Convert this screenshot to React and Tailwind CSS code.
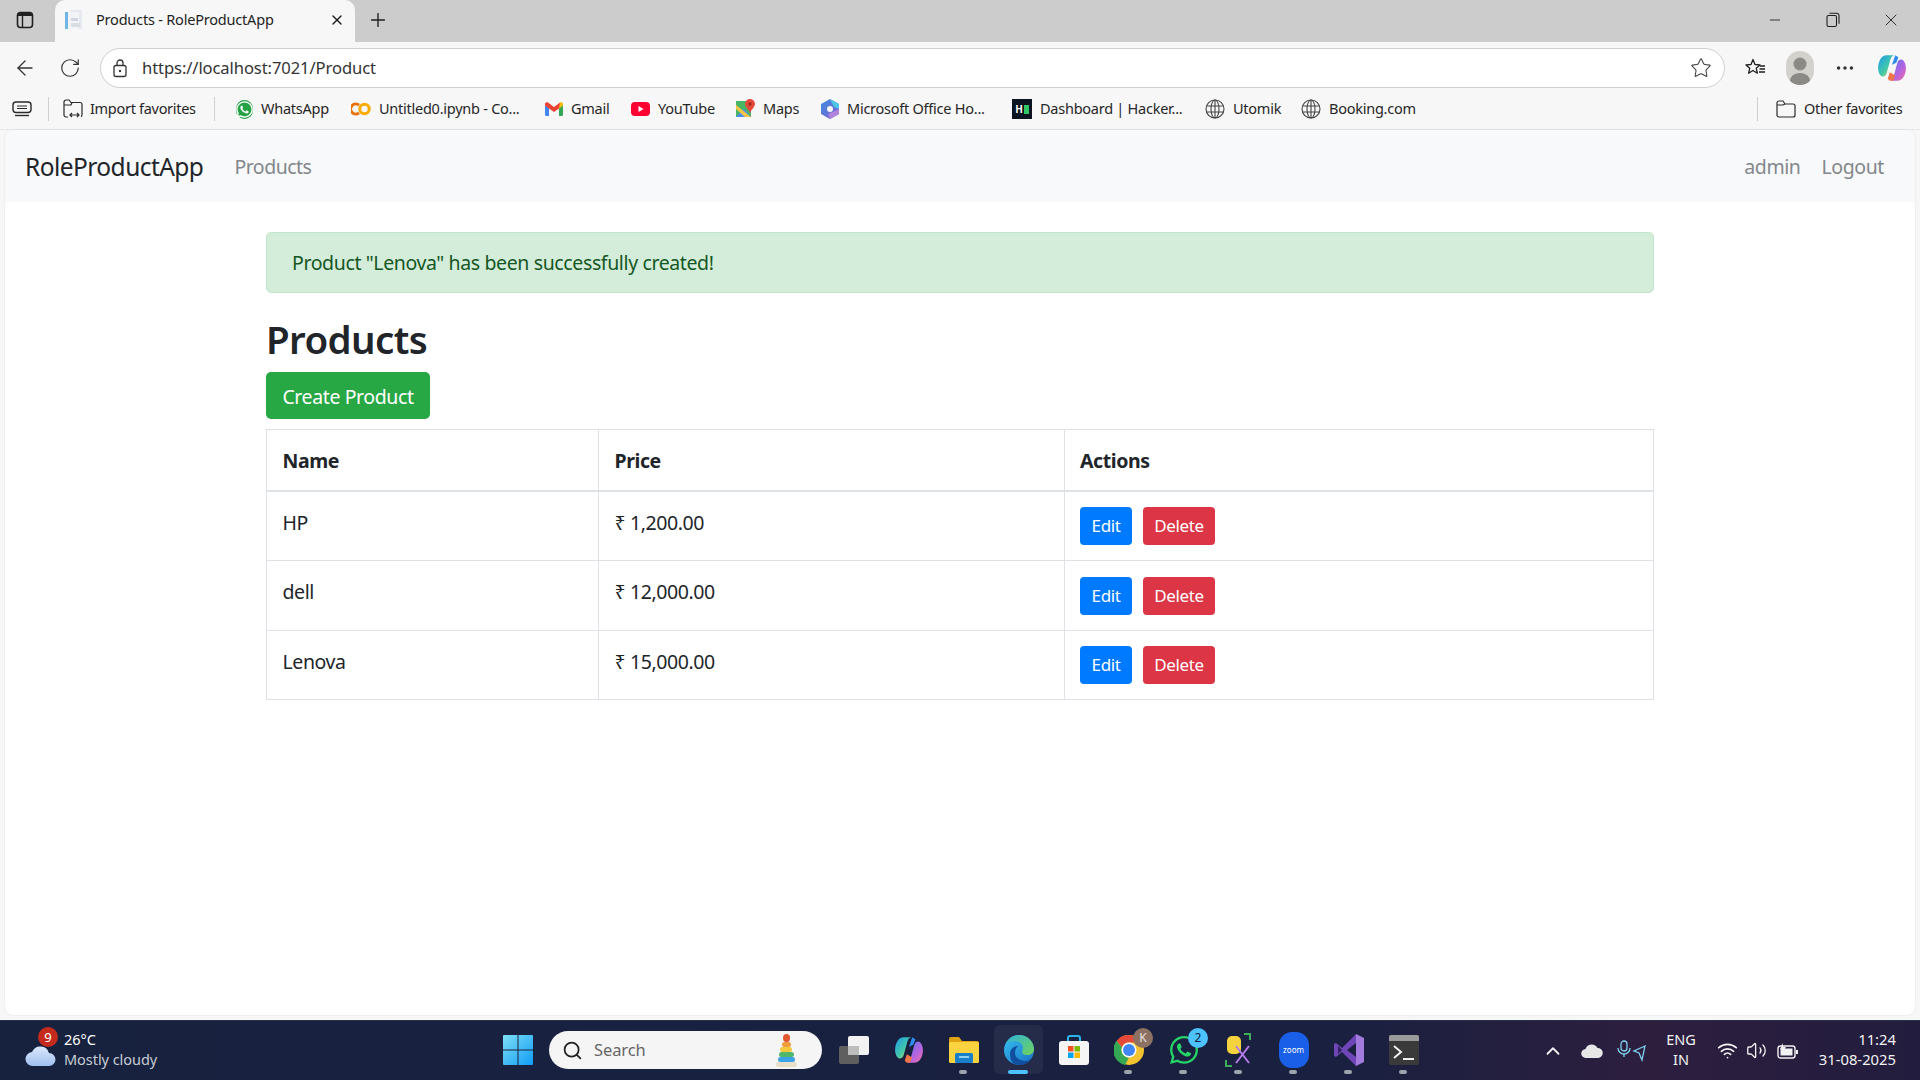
import React from 'react';
import { ArrowLeft, ChevronUp, Minus, MoreHorizontal, Plus, RotateCw, Search, Star, Volume2, Wifi, X } from 'lucide-react';
import { FaWhatsapp } from 'react-icons/fa';

function PanelIcon() {
  return (
    <svg width="20" height="20" viewBox="0 0 20 20" fill="none">
      <rect x="2.5" y="2.5" width="15" height="15" rx="3" stroke="#1f1f1f" strokeWidth="1.6" />
      <path d="M3 6V5a2 2 0 0 1 2-2h10a2 2 0 0 1 2 2v1z" fill="#1f1f1f" />
      <path d="M7.5 6v11" stroke="#1f1f1f" strokeWidth="1.4" />
    </svg>
  );
}

function TabFavicon() {
  return (
    <svg width="20" height="22" viewBox="0 0 20 22">
      <rect x="6" y="1" width="12" height="19" fill="#e6eaf0" />
      <rect x="1" y="3" width="3" height="17" fill="#6fb6e6" />
      <rect x="4" y="3" width="11" height="17" fill="#f2f4f7" />
      <rect x="7" y="9" width="7" height="3" fill="#cfd6df" />
      <rect x="7" y="14" width="9" height="4" fill="#d9dee5" />
    </svg>
  );
}

function RestoreIcon() {
  return (
    <svg width="14" height="16" viewBox="0 0 14 16" fill="none" stroke="#1f1f1f" strokeWidth="1.1">
      <rect x="1" y="3.5" width="9.5" height="11" rx="1.5" />
      <path d="M3.5 1.2h7a2.5 2.5 0 0 1 2.5 2.5v8" />
    </svg>
  );
}

function LockIcon() {
  return (
    <svg width="18" height="20" viewBox="0 0 18 20" fill="none" stroke="#333" strokeWidth="1.3">
      <rect x="3" y="7.5" width="12" height="11" rx="2" />
      <path d="M6 7.5V5a3 3 0 0 1 6 0v2.5" />
      <circle cx="9" cy="13" r="1.2" fill="#333" stroke="none" />
    </svg>
  );
}

function FavoritesIcon() {
  return (
    <svg width="22" height="22" viewBox="0 0 22 22" fill="none" stroke="#1f1f1f" strokeWidth="1.3" strokeLinejoin="round">
      <path d="M9 2.5l2 5 5 .4-3.800 3.300 1.200 5-4.400-2.700-4.400 2.700 1.200-5L2 7.900l5-.4z" />
      <path d="M16 9h5M15.500 12h5.500M15 15h6" />
    </svg>
  );
}

function ProfileIcon() {
  return (
    <div className="w-[28px] h-[34px] rounded-full bg-[#d3d1cc] overflow-hidden flex justify-center">
      <svg width="28" height="34" viewBox="0 0 28 34">
        <circle cx="14" cy="13" r="6.500" fill="#8c8a86" />
        <ellipse cx="14" cy="30" rx="10" ry="8" fill="#8c8a86" />
      </svg>
    </div>
  );
}

function CopilotIcon({ size = 28 }) {
  return (
    <svg width={size} height={size} viewBox="0 0 28 28">
      <defs>
        <linearGradient id="cpA" x1="0" y1="0" x2="1" y2="1">
          <stop offset="0" stopColor="#1f9ce8" />
          <stop offset="0.55" stopColor="#43c9a8" />
          <stop offset="1" stopColor="#f4d735" />
        </linearGradient>
        <linearGradient id="cpB" x1="0" y1="0" x2="1" y2="1">
          <stop offset="0" stopColor="#4a7cf0" />
          <stop offset="0.6" stopColor="#b664e0" />
          <stop offset="1" stopColor="#f36fa0" />
        </linearGradient>
      </defs>
      <path d="M9 2h8c-3 0-4 2-5 6l-3 11c-.7 2.400-2 3-3.500 3C3 22 1 18 1 14 1 8 4 2 9 2z" fill="url(#cpA)" />
      <path d="M19 26h-8c3 0 4-2 5-6l3-11c.7-2.400 2-3 3.500-3 2.500 0 4.500 4 4.500 8 0 6-3 12-8 12z" fill="url(#cpB)" />
      <path d="M10 24l2-6 5 3-2 5h-3z" fill="#f0744a" />
      <path d="M17 2l-3 9 4-2 2-5z" fill="#2f8cf0" />
    </svg>
  );
}

function SidebarPillIcon() {
  return (
    <svg width="20" height="16" viewBox="0 0 20 16" fill="none" stroke="#2b2b2b" strokeWidth="1.4">
      <rect x="1" y="1" width="18" height="10.500" rx="3" />
      <path d="M5 5h10M5 7.500h10" strokeWidth="1.200" />
      <path d="M3 14.500h14" />
    </svg>
  );
}

function ImportIcon() {
  return (
    <svg width="20" height="20" viewBox="0 0 20 20" fill="none" stroke="#2b2b2b" strokeWidth="1.2">
      <path d="M5 18H3a2 2 0 0 1-2-2V3a2 2 0 0 1 2-2h3l2 2.500h9a2 2 0 0 1 2 2V16a2 2 0 0 1-1 1.700" />
      <path d="M1 6h7l1-2.500" />
      <path d="M7 16h9M9 14l-2 2 2 2M14 14l2 2-2 2" />
    </svg>
  );
}

function FolderIcon() {
  return (
    <svg width="20" height="20" viewBox="0 0 20 20" fill="none" stroke="#2b2b2b" strokeWidth="1.2">
      <path d="M3 2h4l2 3h8a2 2 0 0 1 2 2v9a2 2 0 0 1-2 2H3a2 2 0 0 1-2-2V4a2 2 0 0 1 2-2z" />
      <path d="M1 6h6l2-1" />
    </svg>
  );
}

function GlobeIcon() {
  return (
    <svg width="20" height="20" viewBox="0 0 20 20" fill="none" stroke="#444" strokeWidth="1.1">
      <circle cx="10" cy="10" r="9" />
      <ellipse cx="10" cy="10" rx="4" ry="9" />
      <path d="M1.500 7h17M1.500 13h17M10 1v18" />
    </svg>
  );
}

function ColabIcon() {
  return (
    <svg width="20" height="14" viewBox="0 0 20 14" fill="none" strokeWidth="3">
      <path d="M8 3.200a5 5 0 1 0 0 7.600" stroke="#e8710a" />
      <circle cx="13.500" cy="7" r="4.700" stroke="#f9ab00" />
    </svg>
  );
}

function GmailIcon() {
  return (
    <svg width="18" height="14" viewBox="0 0 18 14">
      <path d="M0 3v9.500A1.500 1.500 0 0 0 1.500 14H4V6z" fill="#4285f4" />
      <path d="M18 3v9.500a1.500 1.500 0 0 1-1.500 1.500H14V6z" fill="#34a853" />
      <path d="M14 2v4.500L18 3.500V2c0-1.500-1.700-2.300-3-1.400z" fill="#fbbc04" />
      <path d="M0 3.500V2C0 .5 1.700-.3 3 .6L9 5l6-4.400L14 6.500 9 10 4 6.500z" fill="#ea4335" />
    </svg>
  );
}

function YoutubeIcon() {
  return (
    <svg width="19" height="14" viewBox="0 0 19 14">
      <rect width="19" height="14" rx="4" fill="#ff0033" />
      <path d="M7.500 4l5 3-5 3z" fill="#fff" />
    </svg>
  );
}

function MapsIcon() {
  return (
    <svg width="19" height="20" viewBox="0 0 19 20">
      <rect y="2" width="15" height="16" fill="#48b564" />
      <path d="M0 18l8-8 7 8z" fill="#4f8df5" />
      <path d="M0 6l15 12H9L0 10z" fill="#f6c544" />
      <path d="M14 0a5 5 0 0 1 5 5c0 3-3.500 5-5 9-1.500-4-5-6-5-9a5 5 0 0 1 5-5z" fill="#e5493a" />
      <circle cx="14" cy="5" r="1.700" fill="#9c2a20" />
    </svg>
  );
}

function OfficeIcon() {
  return (
    <svg width="18" height="20" viewBox="0 0 18 20">
      <defs>
        <linearGradient id="msA" x1="0" y1="0" x2="1" y2="1">
          <stop offset="0" stopColor="#3f8fe0" />
          <stop offset="1" stopColor="#7b5fd0" />
        </linearGradient>
      </defs>
      <path d="M9 0l9 5v10l-9 5-9-5V5z" fill="url(#msA)" />
      <path d="M9 0l9 5v5l-5-2z" fill="#4fc8e8" />
      <path d="M18 10v5l-9 5-2-5z" fill="#b083dc" />
      <circle cx="9" cy="10" r="3" fill="#f7f7f7" />
    </svg>
  );
}

function HackerIcon() {
  return (
    <div className="w-[20px] h-[20px] bg-[#0b1420] flex items-center justify-center gap-[1px]">
      <span className="text-white text-[10px] leading-none font-bold">H</span>
      <span className="w-[5px] h-[9px] bg-[#2ec866]" />
    </div>
  );
}

function WhatsappBookmarkIcon() {
  return (
    <div className="w-[17px] h-[19px] flex items-center justify-center rounded-full bg-[#25a244]">
      <FaWhatsapp size={19} color="#ffffff" />
    </div>
  );
}

const BOOKMARKS = [
  { label: 'WhatsApp', icon: <WhatsappBookmarkIcon />, cls: 'ml-[21px] w-[17px]', text: 'w-[68px]' },
  { label: 'Untitled0.ipynb - Co...', icon: <ColabIcon />, cls: 'ml-[22px] w-[20px]', text: 'w-[145px]' },
  { label: 'Gmail', icon: <GmailIcon />, cls: 'ml-[21px] w-[18px]', text: 'w-[39px]' },
  { label: 'YouTube', icon: <YoutubeIcon />, cls: 'ml-[21px] w-[19px]', text: 'w-[58px]' },
  { label: 'Maps', icon: <MapsIcon />, cls: 'ml-[20px] w-[19px]', text: 'w-[37px]' },
  { label: 'Microsoft Office Ho...', icon: <OfficeIcon />, cls: 'ml-[21px] w-[18px]', text: 'w-[141px]' },
  { label: 'Dashboard | Hacker...', icon: <HackerIcon />, cls: 'ml-[24px] w-[20px]', text: 'w-[142px]' },
  { label: 'Utomik', icon: <GlobeIcon />, cls: 'ml-[23px] w-[20px]', text: 'w-[49px]' },
  { label: 'Booking.com', icon: <GlobeIcon />, cls: 'ml-[19px] w-[20px]', text: 'w-[87px]' },
];

function Bookmark({ item }) {
  return (
    <>
      <span className={`${item.cls} flex justify-center shrink-0`}>{item.icon}</span>
      <span className={`${item.text} ml-[8px] text-[14.5px] tracking-[-0.25px] text-[#262626] whitespace-nowrap shrink-0`}>{item.label}</span>
    </>
  );
}

function BrowserChrome() {
  return (
    <div className="shrink-0">
      {/* tab strip */}
      <div className="h-[42px] bg-[#cccccc] flex items-end">
        <div className="w-[55px] h-full flex items-center pl-[15px] pb-[2px]">
          <PanelIcon />
        </div>
        <div className="w-[300px] h-[42px] bg-[#f7f7f7] rounded-t-[10px] flex items-center pl-[9px] pr-[10px] pb-[2px]">
          <TabFavicon />
          <span className="ml-[12px] flex-1 text-[14.5px] tracking-[-0.2px] text-[#1f1f1f]">Products - RoleProductApp</span>
          <X size={16} strokeWidth={2} color="#1f1f1f" />
        </div>
        <div className="w-[46px] h-full flex items-center justify-center pb-[2px]">
          <Plus size={22} strokeWidth={1.5} color="#1f1f1f" />
        </div>
        <div className="flex-1" />
        <div className="w-[58px] h-full flex items-center justify-center pb-[2px]"><Minus size={16} strokeWidth={1.3} color="#1f1f1f" /></div>
        <div className="w-[58px] h-full flex items-center justify-center pb-[2px]"><RestoreIcon /></div>
        <div className="w-[58px] h-full flex items-center justify-center pb-[2px]"><X size={20} strokeWidth={1.1} color="#1f1f1f" /></div>
      </div>
      {/* address bar */}
      <div className="h-[46px] bg-[#f7f7f7] flex items-center pt-[6px]">
        <div className="w-[50px] flex justify-center"><ArrowLeft size={24} strokeWidth={1.3} color="#333" /></div>
        <div className="w-[50px] -ml-[5px] mr-[5px] flex justify-center"><RotateCw size={22} strokeWidth={1.3} color="#333" /></div>
        <div className="w-[1625px] h-[40px] bg-white border border-[#cfcfcf] rounded-full flex items-center pl-[10px] pr-[12px]">
          <LockIcon />
          <span className="ml-[13px] flex-1 text-[16.6px] tracking-[-0.1px] text-[#333]">https://localhost:7021/Product</span>
          <Star size={22} strokeWidth={1.2} color="#444" />
        </div>
        <div className="flex-1 flex items-center pl-[19px]">
          <FavoritesIcon />
          <div className="ml-[20px]"><ProfileIcon /></div>
          <div className="ml-[20px]"><MoreHorizontal size={22} strokeWidth={1.8} color="#333" /></div>
          <div className="ml-[21px]"><CopilotIcon size={30} /></div>
        </div>
      </div>
      {/* favorites bar */}
      <div className="h-[42px] bg-[#f7f7f7] border-b border-[#e8e8e8] flex items-center pt-[1px]">
        <div className="ml-[12px]"><SidebarPillIcon /></div>
        <div className="ml-[16px] w-px h-[24px] bg-[#d0d0d0]" />
        <div className="ml-[14px]"><ImportIcon /></div>
        <span className="ml-[7px] w-[105px] text-[14.5px] tracking-[-0.3px] text-[#262626] whitespace-nowrap">Import favorites</span>
        <div className="ml-[19px] w-px h-[24px] bg-[#d0d0d0]" />
        {BOOKMARKS.map((b) => <Bookmark key={b.label} item={b} />)}
        <div className="flex-1" />
        <div className="w-px h-[24px] bg-[#d0d0d0]" />
        <div className="ml-[18px]"><FolderIcon /></div>
        <span className="ml-[8px] w-[116px] text-[14.5px] tracking-[-0.3px] text-[#262626] whitespace-nowrap">Other favorites</span>
      </div>
    </div>
  );
}

const PRODUCTS = [
  { name: 'HP', price: '₹ 1,200.00', h: 'h-[70px]' },
  { name: 'dell', price: '₹ 12,000.00', h: 'h-[70px]' },
  { name: 'Lenova', price: '₹ 15,000.00', h: 'h-[69px]' },
];

function WebPage() {
  return (
    <div className="flex-1 mx-[5px] bg-white rounded-t-[8px] rounded-b-[8px] overflow-hidden shadow-[0_0_2px_rgba(0,0,0,0.12)]">
      <nav className="h-[72px] bg-[#f8f9fa] flex items-center pl-[20px] pr-[31px] pt-[2px]">
        <span className="text-[24.5px] tracking-[-0.55px] text-[#212529]">RoleProductApp</span>
        <span className="ml-[31px] text-[19.5px] tracking-[-0.5px] text-[#83878b]">Products</span>
        <div className="flex-1" />
        <span className="text-[19.5px] tracking-[-0.4px] text-[#83878b]">admin</span>
        <span className="ml-[21px] text-[19.5px] tracking-[-0.4px] text-[#83878b]">Logout</span>
      </nav>
      <div className="w-[1388px] mx-auto pt-[30px]">
        <div className="h-[61px] bg-[#d4edda] border border-[#c3e6cb] rounded-[5px] flex items-center pl-[25px] pr-[26px] pt-[1px] text-[19.5px] tracking-[-0.38px] text-[#155724]">
          Product "Lenova" has been successfully created!
        </div>
        <h1 className="mt-[14px] h-[64px] text-[38.5px] leading-[64px] font-semibold tracking-[-0.6px] text-[#212529]">Products</h1>
        <button className="mt-[1px] block w-[164px] h-[47px] pt-[2px] bg-[#28a745] rounded-[5px] text-[19.5px] tracking-[-0.4px] text-white">Create Product</button>
        <table className="mt-[10px] w-[1387px] table-fixed border-collapse text-[19.5px] tracking-[-0.4px] text-[#212529]">
          <colgroup>
            <col className="w-[332px]" />
            <col className="w-[466px]" />
            <col className="w-[589px]" />
          </colgroup>
          <thead>
            <tr className="h-[61px]">
              <th className="border border-[#dee2e6] border-b-2 pl-[15.5px] pr-[16px] pt-[2px] text-left font-bold">Name</th>
              <th className="border border-[#dee2e6] border-b-2 pl-[15.5px] pr-[16px] pt-[2px] text-left font-bold">Price</th>
              <th className="border border-[#dee2e6] border-b-2 px-[15px] pt-[2px] text-left font-bold">Actions</th>
            </tr>
          </thead>
          <tbody>
            {PRODUCTS.map((p) => (
              <tr key={p.name} className={p.h}>
                <td className="border border-[#dee2e6] pl-[15.5px] pr-[16px] pt-[16px] align-top">{p.name}</td>
                <td className="border border-[#dee2e6] pl-[15.5px] pr-[16px] pt-[16px] align-top">{p.price}</td>
                <td className="border border-[#dee2e6] px-[15px] align-middle">
                  <div className="flex gap-[11px]">
                    <button className="w-[52px] h-[38px] bg-[#007bff] rounded-[4px] text-[17px] tracking-[-0.4px] text-white">Edit</button>
                    <button className="w-[72px] h-[38px] bg-[#dc3545] rounded-[4px] text-[17px] tracking-[-0.4px] text-white">Delete</button>
                  </div>
                </td>
              </tr>
            ))}
          </tbody>
        </table>
      </div>
    </div>
  );
}

function WindowsLogo() {
  return (
    <svg width="30" height="30" viewBox="0 0 30 30">
      <defs>
        <linearGradient id="winA" x1="0" y1="0" x2="1" y2="1">
          <stop offset="0" stopColor="#7fe0f5" />
          <stop offset="1" stopColor="#0f9bf5" />
        </linearGradient>
      </defs>
      <path d="M1 0h13.500v14.500H0V1a1 1 0 0 1 1-1zM15.500 0H29a1 1 0 0 1 1 1v13.500H15.500zM0 15.500h14.500V30H1a1 1 0 0 1-1-1zM15.500 15.500H30V29a1 1 0 0 1-1 1H15.500z" fill="url(#winA)" />
    </svg>
  );
}

function CloudIcon() {
  return (
    <svg width="32" height="24" viewBox="0 0 32 24">
      <defs>
        <linearGradient id="wcA" x1="0" y1="0" x2="0" y2="1">
          <stop offset="0" stopColor="#dbe8fb" />
          <stop offset="1" stopColor="#9fc0ee" />
        </linearGradient>
      </defs>
      <path d="M8 23a7 7 0 0 1-1-14 9 9 0 0 1 17 1 6.500 6.500 0 0 1 0 13z" fill="url(#wcA)" />
    </svg>
  );
}

function PyramidIcon() {
  return (
    <div className="flex flex-col items-center w-[22px]">
      <span className="w-[7px] h-[8px] rounded-full bg-[#e2572f]" />
      <span className="w-[9px] h-[5px] rounded-sm bg-[#ef9d3a]" />
      <span className="w-[12px] h-[5px] rounded-sm bg-[#f3c73e]" />
      <span className="w-[15px] h-[5px] rounded-sm bg-[#4fb86a]" />
      <span className="w-[17px] h-[5px] rounded-sm bg-[#3aa3e8]" />
      <span className="w-[21px] h-[5px] rounded-full bg-[#e8dfc8]" />
    </div>
  );
}

function TaskViewIcon() {
  return (
    <svg width="30" height="28" viewBox="0 0 30 28">
      <rect x="0" y="10" width="20" height="18" rx="2" fill="#5f5f5f" />
      <rect x="9" y="0" width="21" height="19" rx="2" fill="#f2f2f2" />
      <rect x="9" y="10" width="11" height="9" fill="#bdbdbd" />
    </svg>
  );
}

function ExplorerIcon() {
  return (
    <svg width="30" height="26" viewBox="0 0 30 26">
      <path d="M0 2a2 2 0 0 1 2-2h8l3 4h15a2 2 0 0 1 2 2v4H0z" fill="#e0a412" />
      <rect y="5" width="30" height="21" rx="1.500" fill="#fbd23f" />
      <rect x="6" y="16" width="18" height="10" rx="1.500" fill="#1a7fc8" />
      <rect x="10" y="19" width="10" height="2" fill="#8fd0f2" />
    </svg>
  );
}

function EdgeIcon() {
  return (
    <svg width="30" height="30" viewBox="0 0 30 30">
      <defs>
        <linearGradient id="edA" x1="0" y1="0" x2="1" y2="1">
          <stop offset="0" stopColor="#35c1f1" />
          <stop offset="1" stopColor="#1b6fc4" />
        </linearGradient>
        <linearGradient id="edB" x1="0" y1="0" x2="1" y2="1">
          <stop offset="0" stopColor="#2fb4d8" />
          <stop offset="1" stopColor="#70d25a" />
        </linearGradient>
      </defs>
      <circle cx="15" cy="15" r="15" fill="url(#edA)" />
      <path d="M2 9C5 2 11 0 15 0c9 0 15 7 15 14 0 4-3 6-7 6-3 0-5-1-5-3 0-1 1-2 1-4 0-4-4-7-8-7C6 6 3 7 2 9z" fill="url(#edB)" />
      <path d="M15 30c-7 0-9-6-9-11 0-5 4-8 8-8-2 2-3 4-3 7 0 5 5 8 10 8 3 0 5-1 7-3-2 4-7 7-13 7z" fill="#0f4f9e" />
    </svg>
  );
}

function StoreIcon() {
  return (
    <svg width="30" height="30" viewBox="0 0 30 30">
      <path d="M9 6V3a2 2 0 0 1 2-2h8a2 2 0 0 1 2 2v3" fill="none" stroke="#2bb4ea" strokeWidth="2" />
      <rect y="6" width="30" height="24" rx="3" fill="#f5f5f5" />
      <rect x="9" y="11" width="5.500" height="5.500" fill="#f25022" />
      <rect x="15.500" y="11" width="5.500" height="5.500" fill="#7fba00" />
      <rect x="9" y="17.500" width="5.500" height="5.500" fill="#00a4ef" />
      <rect x="15.500" y="17.500" width="5.500" height="5.500" fill="#ffb900" />
    </svg>
  );
}

function ChromeIcon() {
  return (
    <svg width="30" height="30" viewBox="0 0 30 30">
      <circle cx="15" cy="15" r="15" fill="#f2c230" />
      <path d="M15 0a15 15 0 0 1 13 7.500H15a7.500 7.500 0 0 0-7 5L2.500 6A15 15 0 0 1 15 0z" fill="#e5493a" />
      <path d="M2.500 6L8 12.500a7.500 7.500 0 0 0 7 10L11 30A15 15 0 0 1 2.500 6z" fill="#34a853" />
      <circle cx="15" cy="15" r="7.500" fill="#fff" />
      <circle cx="15" cy="15" r="6" fill="#4285f4" />
    </svg>
  );
}

function DevToolIcon() {
  return (
    <svg width="28" height="34" viewBox="0 0 28 34" fill="none">
      <rect x="2" y="3" width="14" height="18" rx="5" fill="#f5d33f" />
      <path d="M19 1h6v6M1 27v6h6" stroke="#3fae5a" strokeWidth="2" />
      <path d="M11 30L24 13M24 30L11 13" stroke="#b57be8" strokeWidth="2" />
    </svg>
  );
}

function VsIcon() {
  return (
    <svg width="30" height="32" viewBox="0 0 30 32">
      <path d="M22 0l8 4v24l-8 4V0z" fill="#a37bdf" />
      <path d="M22 0L8 14 2 9 0 10v12l2 1 6-5 14 14 0-9-9-7 9-7z" fill="#6f46b8" />
      <path d="M4 12v8l4-4z" fill="#2e1f5e" />
    </svg>
  );
}

function TerminalIcon() {
  return (
    <div className="w-[30px] h-[30px] rounded-[2px] bg-[#3a3a3a] overflow-hidden flex flex-col">
      <div className="h-[6px] bg-[#9a9a9a]" />
      <svg width="30" height="24" viewBox="0 0 30 24" fill="none" stroke="#f0f0f0" strokeWidth="2">
        <path d="M5 5l7 6-7 6M14 18h11" />
      </svg>
    </div>
  );
}

const TASK_ICONS = [
  { id: 'task', icon: <TaskViewIcon /> },
  { id: 'copilot', icon: <CopilotIcon size={30} /> },
  { id: 'explorer', icon: <ExplorerIcon />, dot: true },
  { id: 'edge', icon: <EdgeIcon />, active: true },
  { id: 'store', icon: <StoreIcon /> },
  { id: 'chrome', icon: <ChromeIcon />, dot: true, badge: 'K', badgeCls: 'bg-[#8d7264] text-[#e8e0dc]' },
  { id: 'whatsapp', icon: <FaWhatsapp size={32} color="#25d366" />, dot: true, badge: '2', badgeCls: 'bg-[#4cc2ff] text-[#10213a]' },
  { id: 'devtool', icon: <DevToolIcon />, dot: true },
  {
    id: 'zoom',
    icon: (
      <div className="w-[30px] h-[36px] rounded-[13px] bg-[#1a5fe8] flex items-center justify-center text-white text-[8px] leading-none">zoom</div>
    ),
    dot: true,
  },
  { id: 'vs', icon: <VsIcon />, dot: true },
  { id: 'terminal', icon: <TerminalIcon />, dot: true },
];

function Taskbar() {
  return (
    <div className="h-[60px] shrink-0 flex items-center bg-[linear-gradient(90deg,#17223f_0%,#1a2040_70%,#2d1e3e_86%,#221d3e_100%)] border-t border-[#2a3045]">
      <div className="w-[503px] h-full flex items-center pl-[25px] shrink-0">
        <div className="relative w-[32px] mt-[8px]">
          <CloudIcon />
          <span className="absolute -top-[16px] left-[13px] w-[20px] h-[20px] rounded-full bg-[#c42b1c] text-white text-[13px] leading-[20px] text-center">9</span>
        </div>
        <div className="ml-[7px] pb-[4px] flex flex-col text-[14.5px] leading-[20px] tracking-[-0.05px]">
          <span className="text-white">26°C</span>
          <span className="text-[#c8ccd4]">Mostly cloudy</span>
        </div>
      </div>
      <div className="-mt-[1px]"><WindowsLogo /></div>
      <div className="ml-[16px] -mt-[1px] w-[273px] h-[38px] rounded-full bg-[#f5f5f5] flex items-center pl-[13px] pr-[25px] shrink-0">
        <Search size={21} strokeWidth={2} color="#222" />
        <span className="ml-[11px] flex-1 text-[16.5px] tracking-[-0.1px] text-[#666]">Search</span>
        <PyramidIcon />
      </div>
      <div className="ml-[4px] flex h-full shrink-0">
        {TASK_ICONS.map((t) => (
          <div key={t.id} className="relative w-[55px] h-full flex items-center justify-center pb-[2px]">
            {t.active && <div className="absolute left-[3px] top-[4px] w-[49px] h-[49px] rounded-[6px] bg-white/5" />}
            <div className="relative flex items-center justify-center">{t.icon}</div>
            {t.badge && (
              <span className={`absolute top-[7px] right-[3px] w-[20px] h-[20px] rounded-full text-[12px] leading-[20px] text-center ${t.badgeCls}`}>{t.badge}</span>
            )}
            {t.dot && <span className="absolute bottom-[6px] left-[23px] w-[8px] h-[4px] rounded-full bg-[#9da3ad]" />}
            {t.active && <span className="absolute bottom-[6px] left-[17px] w-[20px] h-[4px] rounded-full bg-[#4cc2ff]" />}
          </div>
        ))}
      </div>
      <div className="flex-1" />
      <ChevronUp size={22} strokeWidth={2} color="#f0f0f0" />
      <svg className="ml-[17px]" width="22" height="14" viewBox="0 0 22 14">
        <path d="M5 14a4.500 4.500 0 0 1-.5-9 6.500 6.500 0 0 1 12-1A5 5 0 0 1 17 14z" fill="#e6e6e6" />
      </svg>
      <svg className="ml-[14px]" width="30" height="22" viewBox="0 0 30 22" fill="none" stroke="#7fd3ee" strokeWidth="1.3">
        <rect x="4" y="1" width="6" height="10" rx="3" />
        <path d="M1 8a6 6 0 0 0 12 0M7 14v3" />
        <path d="M28 6l-11 5 5 2 3 7z" />
      </svg>
      <div className="ml-[14px] pb-[3px] w-[40px] flex flex-col items-center text-[14.5px] leading-[20px] text-[#f2f2f2]">
        <span>ENG</span>
        <span>IN</span>
      </div>
      <div className="ml-[16px]"><Wifi size={21} strokeWidth={2} color="#f2f2f2" /></div>
      <div className="ml-[8px]"><Volume2 size={21} strokeWidth={1.5} color="#f2f2f2" /></div>
      <svg className="ml-[10px]" width="22" height="16" viewBox="0 0 22 16">
        <rect x="1" y="3" width="17" height="12" rx="2.500" fill="none" stroke="#f2f2f2" strokeWidth="1.400" />
        <rect x="3.500" y="5.500" width="12" height="7" fill="#f2f2f2" />
        <rect x="19" y="7" width="2" height="4" fill="#f2f2f2" />
        <path d="M6 0L3 6h3l-1 4 4-6H6z" fill="#f2f2f2" />
      </svg>
      <div className="ml-[20px] mr-[24px] pb-[4px] w-[77px] flex flex-col items-end text-[14.8px] leading-[20px] text-[#f2f2f2] whitespace-nowrap">
        <span>11:24</span>
        <span>31-08-2025</span>
      </div>
    </div>
  );
}

export default function App() {
  return (
    <div className="w-[1920px] h-[1080px] flex flex-col overflow-hidden bg-[#f7f7f7] font-['Noto_Sans',sans-serif]">
      <BrowserChrome />
      <div className="flex-1 flex flex-col pb-[5px] min-h-0">
        <WebPage />
      </div>
      <Taskbar />
    </div>
  );
}
